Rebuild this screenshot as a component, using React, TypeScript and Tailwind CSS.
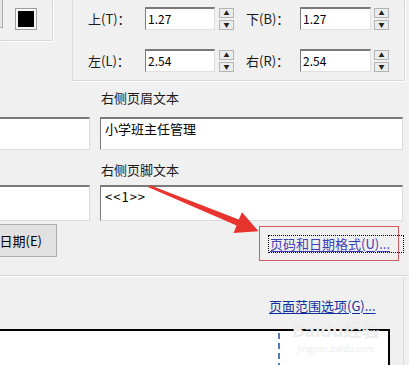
import React from "react";

const etched = "border-[#d9d9d9] shadow-[1px_1px_0_#ffffff]";

function Spinner() {
  return (
    <div className="flex flex-col gap-[2px] w-[15px]">
      <div className="h-[10px] border border-[#b4b4b4] bg-[#ececec] flex items-center justify-center text-[6px] leading-none text-[#222]">
        ▲
      </div>
      <div className="h-[10px] border border-[#b4b4b4] bg-[#ececec] flex items-center justify-center text-[6px] leading-none text-[#222]">
        ▼
      </div>
    </div>
  );
}

function NumField({ value, className = "" }: { value: string; className?: string }) {
  return (
    <div
      className={`h-[23px] bg-white border-t-2 border-l border-t-[#7a7a7a] border-l-[#7a7a7a] border-r border-b border-r-[#e0e0e0] border-b-[#e0e0e0] pl-[2px] text-[12px] leading-[19px] text-black ${className}`}
    >
      {value}
    </div>
  );
}

function TextBox({ value, className = "" }: { value?: string; className?: string }) {
  return (
    <div
      className={`bg-white border-t-2 border-l border-t-[#7a7a7a] border-l-[#7a7a7a] border-r border-b border-r-[#dcdcdc] border-b-[#dcdcdc] pl-[4px] pt-[1px] text-[13px] leading-[17px] text-black ${className}`}
    >
      {value}
    </div>
  );
}

function MarginRow({ a, av, b, bv }: { a: string; av: string; b: string; bv: string }) {
  return (
    <div className="flex items-center">
      <span className="w-[57px] text-[13px] leading-[16px] text-[#1a1a1a]">{a}</span>
      <NumField value={av} className="w-[70px]" />
      <div className="ml-[4px]">
        <Spinner />
      </div>
      <span className="ml-[12px] w-[54px] text-[13px] leading-[16px] text-[#1a1a1a]">{b}</span>
      <NumField value={bv} className="w-[71px]" />
      <div className="ml-[3px]">
        <Spinner />
      </div>
    </div>
  );
}

export default function App() {
  return (
    <div className="relative w-[409px] h-[365px] overflow-hidden bg-[#f0f0f0] font-['Noto_Sans_CJK_SC',sans-serif]">
      {/* top: colour box + margins */}
      <div className="flex h-[81px] items-start">
        <div className={`w-[53px] h-[41px] border-r border-b ${etched} flex items-start`}>
          <div className="w-[3px] h-[28px] border-r border-b border-[#adadad] bg-[#e6e6e6]" />
          <div className="ml-[12px] mt-[8px] w-[22px] h-[22px] border border-[#a0a0a0] bg-[#f7f7f7] p-[2px]">
            <div className="w-full h-full bg-black" />
          </div>
        </div>
        <div className={`ml-[19px] w-[333px] h-[81px] border-l border-r border-b ${etched} pl-[15px] pt-[7px] flex flex-col gap-[19px]`}>
          <MarginRow a="上(T)：" av="1.27" b="下(B)：" bv="1.27" />
          <MarginRow a="左(L)：" av="2.54" b="右(R)：" bv="2.54" />
        </div>
      </div>

      {/* header / footer text */}
      <div className="flex flex-col">
        <span className="ml-[101px] mt-[9px] text-[13px] leading-[16px] text-[#1a1a1a]">右侧页眉文本</span>
        <div className="flex mt-[11px] h-[33px]">
          <TextBox className="-ml-[10px] w-[100px]" />
          <TextBox value="小学班主任管理" className="ml-[10px] w-[303px]" />
        </div>
        <span className="ml-[101px] mt-[12px] text-[13px] leading-[16px] text-[#1a1a1a]">右侧页脚文本</span>
        <div className="flex mt-[7px] h-[36px]">
          <TextBox className="-ml-[10px] w-[100px]" />
          <TextBox value="<<1>>" className="ml-[10px] w-[303px] tracking-[1px]" />
        </div>
        <div className="flex mt-[3px] h-[33px] items-start">
          <button className="-ml-[60px] w-[117px] h-[33px] border border-[#adadad] bg-[#e1e1e1] flex items-center justify-end pr-[14px] text-[13px] text-black">
            页码和日期(E)
          </button>
          <div className="ml-[211px] mt-[11px] w-[136px] h-[18px] border border-dotted border-black flex items-center">
            <span className="pl-[1px] text-[13px] leading-[16px] text-[#3f3db6] underline underline-offset-2">
              页码和日期格式(U)...
            </span>
          </div>
        </div>
        <div className="mt-[18px] h-[2px] border-t border-t-[#d6d6d6] border-b border-b-white" />
      </div>

      {/* page range + preview */}
      <div className="w-[404px] h-[90px] border-r border-[#dadada] flex flex-col">
        <span className="ml-[269px] mt-[21px] text-[13px] leading-[16px] text-[#102f9e] underline underline-offset-2">
          页面范围选项(G)...
        </span>
        <div className="mt-[15px] w-[390px] h-[40px] border-t-2 border-r-2 border-black bg-white flex">
          <div className="ml-[278px] mt-[2px] h-full border-l-2 border-dashed border-[#4f7db3]" />
        </div>
      </div>

      {/* watermark */}
      <div className="absolute left-[292px] top-[319px] flex flex-col items-center gap-[5px] pointer-events-none">
        <span className="text-[18px] leading-[20px] font-bold text-[#ececec]">Baidu经验</span>
        <span className="text-[9px] leading-[10px] text-[#ececec]">jingyan.baidu.com</span>
      </div>

      {/* annotation */}
      <svg className="absolute inset-0 pointer-events-none" width="409" height="365" viewBox="0 0 409 365">
        <polygon
          points="148.4,187.2 236.6,225.6 233.5,233 258.5,231.2 242,212.3 238.8,219.6 149.6,184.9"
          fill="#e8342f"
        />
        <rect x="259.5" y="226.5" width="139" height="34" fill="none" stroke="#cf5a60" strokeWidth="1" />
      </svg>
    </div>
  );
}
